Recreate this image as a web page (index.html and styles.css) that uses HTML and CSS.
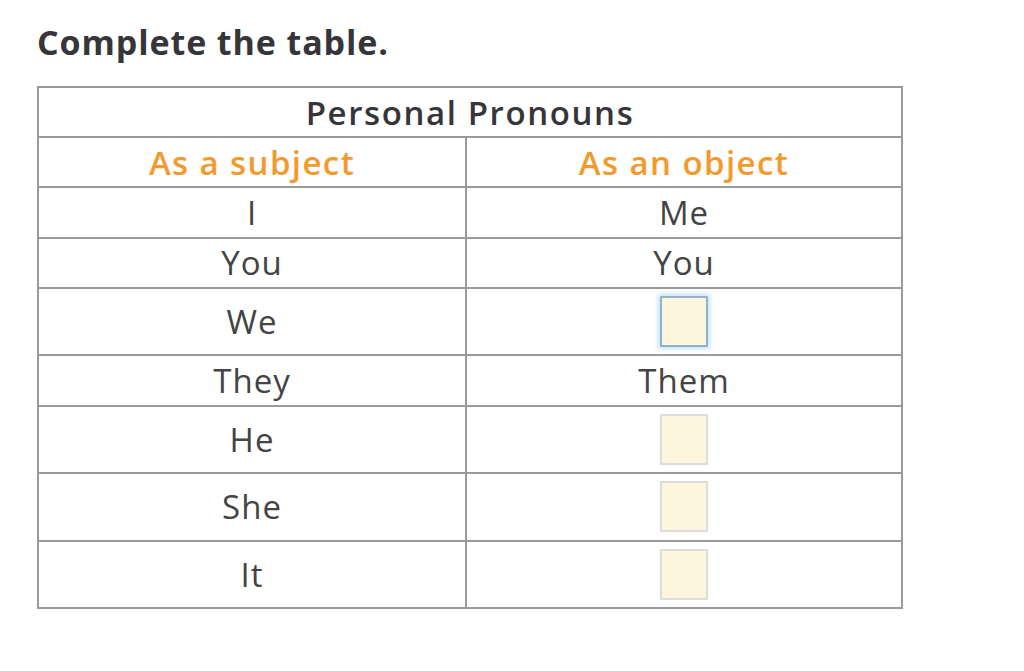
FILE: index.html
```html
<!DOCTYPE html>
<html lang="en">
<head>
<meta charset="utf-8">
<title>Complete the table</title>
<link rel="stylesheet" href="styles.css">
</head>
<body>
<main class="page">
  <h1 class="title">Complete the table.</h1>
  <table class="pronouns">
    <colgroup>
      <col class="col-subject">
      <col class="col-object">
    </colgroup>
    <tr class="row-s">
      <th class="caption" colspan="2">Personal Pronouns</th>
    </tr>
    <tr class="row-s">
      <th class="col-head">As a subject</th>
      <th class="col-head">As an object</th>
    </tr>
    <tr class="row-s"><td>I</td><td>Me</td></tr>
    <tr class="row-s"><td>You</td><td>You</td></tr>
    <tr class="row-l"><td>We</td><td><input class="blank focused" type="text" aria-label="We object"></td></tr>
    <tr class="row-s"><td>They</td><td>Them</td></tr>
    <tr class="row-l"><td>He</td><td><input class="blank" type="text" aria-label="He object"></td></tr>
    <tr class="row-l"><td>She</td><td><input class="blank" type="text" aria-label="She object"></td></tr>
    <tr class="row-l"><td>It</td><td><input class="blank" type="text" aria-label="It object"></td></tr>
  </table>
</main>
</body>
</html>
```

FILE: styles.css
```css
html, body {
  margin: 0;
  padding: 0;
  background: #ffffff;
}

.page {
  padding: 17px 0 0 37px;
  font-family: "Open Sans", "Noto Sans", sans-serif;
  color: #444444;
}

.title {
  margin: 0 0 19px 0;
  font-size: 34px;
  font-weight: 700;
  color: #35353a;
  line-height: 50px;
  letter-spacing: 0.9px;
}

.pronouns {
  border-collapse: collapse;
  width: 864px;
  table-layout: fixed;
}

.col-subject {
  width: 428px;
}

.col-object {
  width: 436px;
}

.pronouns th,
.pronouns td {
  border: 2px solid #9a9a9a;
  text-align: center;
  vertical-align: middle;
  padding: 0;
  font-size: 33px;
  line-height: 1;
}

.row-s th,
.row-s td {
  height: 48.2px;
}

.row-l td {
  height: 65.6px;
}

.caption {
  font-weight: 600;
  color: #35353a;
  letter-spacing: 1.6px;
}

.col-head {
  font-weight: 600;
  color: #f39a2e;
  letter-spacing: 1.4px;
}

.pronouns td {
  font-weight: 400;
  color: #444444;
  letter-spacing: 1px;
}

.blank {
  display: block;
  margin: 0 auto;
  box-sizing: border-box;
  width: 48px;
  height: 51px;
  background: #fdf6dc;
  border: 2px solid #dcdcdc;
  border-radius: 1px;
  padding: 0;
  outline: none;
}

.blank.focused {
  border-color: #8fb3cc;
  box-shadow: 0 0 5px 2px #c4e2fa;
}
```
